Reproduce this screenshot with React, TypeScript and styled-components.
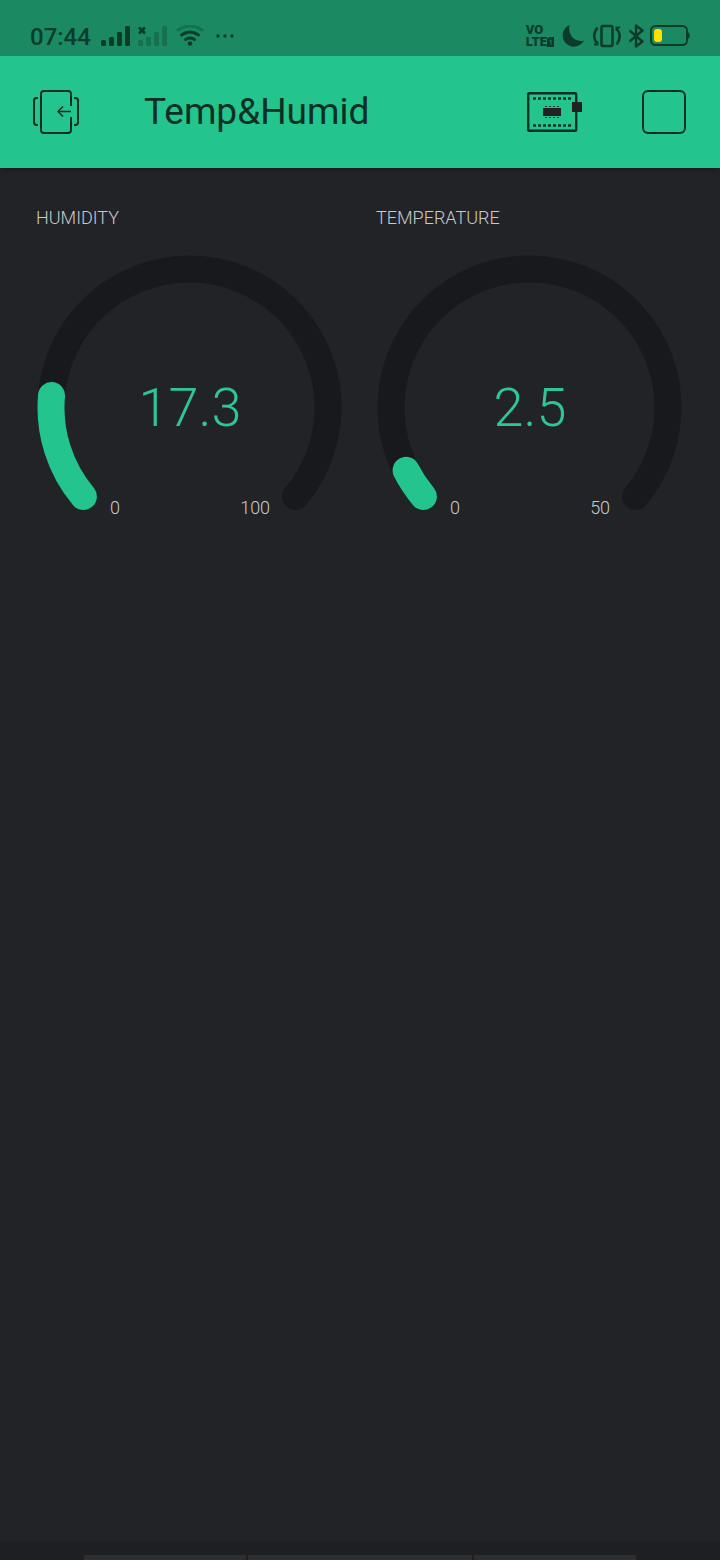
import React from "react";
import styled, { createGlobalStyle } from "styled-components";

const green = "#24c48e";
const ink = "#0b3b2a";
const headerInk = "#0c2f23";

const GlobalStyle = createGlobalStyle`
  * { box-sizing: border-box; }
  body {
    margin: 0;
    background: #222327;
    font-family: Roboto, "Liberation Sans", sans-serif;
  }
`;

const Screen = styled.div`
  min-height: 100vh;
  display: flex;
  flex-direction: column;
  background: #222327;
`;

const StatusBar = styled.div`
  height: 56px;
  padding: 16px 30px 0;
  display: flex;
  justify-content: space-between;
  align-items: center;
  background: #1b8a63;
  color: ${ink};
`;

const StatusGroup = styled.div<{ $gap: number }>`
  display: flex;
  align-items: center;
  gap: ${(p) => p.$gap}px;
`;

const Clock = styled.time`
  margin-right: 2px;
  padding-top: 2px;
  font-size: 24px;
  line-height: 28px;
  font-weight: 500;
`;

const Volte = styled.span`
  display: flex;
  flex-direction: column;
  font-size: 13px;
  line-height: 12px;
  font-weight: 900;
`;

const VolteRow = styled.span`
  display: flex;
  align-items: center;
`;

const AppBar = styled.header`
  height: 112px;
  padding: 0 33px 0 32px;
  display: flex;
  align-items: center;
  background: ${green};
  box-shadow: 0 4px 4px -2px #1a1b1e;
`;

const Title = styled.h1`
  flex: 1;
  margin: 0 0 0 64px;
  font-size: 37px;
  line-height: 48px;
  font-weight: 400;
  color: ${headerInk};
`;

const IconButton = styled.button<{ $after?: number }>`
  display: flex;
  padding: 0;
  border: 0;
  margin-right: ${(p) => p.$after ?? 0}px;
  background: none;
  cursor: pointer;
`;

const Board = styled.main`
  flex: 1;
  display: grid;
  grid-template-columns: 1fr 1fr;
  align-content: start;
  padding: 36px 20px;
`;

const Widget = styled.section`
  padding: 0 16px;
`;

const WidgetLabel = styled.h2`
  margin: 0 0 22px;
  font-size: 18px;
  line-height: 28px;
  font-weight: 300;
  color: #c9cacd;
`;

const Dial = styled.div`
  display: grid;
  & > * { grid-area: 1 / 1; }
`;

const DialArc = styled.svg`
  display: block;
  width: 100%;
`;

const Reading = styled.output`
  place-self: center;
  padding-top: 44px;
  font-size: 54px;
  line-height: 64px;
  font-weight: 300;
  color: #2fc596;
`;

const Limits = styled.div`
  align-self: end;
  display: flex;
  justify-content: space-between;
  padding: 0 24%;
  font-size: 18px;
  line-height: 20px;
  font-weight: 300;
  color: #c9cacd;
`;

const Dock = styled.div`
  height: 19px;
  padding: 14px 84px 0;
  display: grid;
  grid-template-columns: 162fr 224fr 162fr;
  gap: 2px;
  background: #1e1f22;
`;

const DockSlot = styled.div`
  background: #2f2d2e;
`;

const CENTER_X = 153.5;
const CENTER_Y = 153.5;
const RADIUS = 138.5;
const START = 220;
const SWEEP = 260;

function point(angle: number) {
  const rad = (angle * Math.PI) / 180;
  return `${CENTER_X + RADIUS * Math.cos(rad)} ${CENTER_Y - RADIUS * Math.sin(rad)}`;
}

function arc(fraction: number) {
  const span = SWEEP * fraction;
  return `M${point(START)} A${RADIUS} ${RADIUS} 0 ${span > 180 ? 1 : 0} 1 ${point(START - span)}`;
}

function Gauge({ label, value, max }: { label: string; value: number; max: number }) {
  return (
    <Widget aria-label={label}>
      <WidgetLabel>{label}</WidgetLabel>
      <Dial>
        <DialArc viewBox="0 0 308 264" fill="none" strokeWidth="27" strokeLinecap="round" aria-hidden="true">
          <path d={arc(1)} stroke="#18191c" />
          <path d={arc(value / max)} stroke={green} />
        </DialArc>
        <Reading>{value}</Reading>
        <Limits>
          <span>0</span>
          <span>{max}</span>
        </Limits>
      </Dial>
    </Widget>
  );
}

const SignalBars = () => (
  <>
    <rect x="0" y="14" width="5" height="6" rx="1.5" />
    <rect x="8" y="11" width="5" height="9" rx="1.5" />
    <rect x="16" y="6" width="5" height="14" rx="1.5" />
    <rect x="24" y="0" width="5" height="20" rx="1.5" />
  </>
);

const Signal = () => (
  <svg width="29" height="20" viewBox="0 0 29 20" fill={ink} aria-hidden="true">
    <SignalBars />
  </svg>
);

const NoSignal = () => (
  <svg width="30" height="20" viewBox="0 0 30 20" fill="#15714f" aria-hidden="true">
    <SignalBars />
    <path d="M1 1.500l6 6M7 1.500l-6 6" stroke={ink} strokeWidth="2.600" />
  </svg>
);

const Wifi = () => (
  <svg width="28" height="22" viewBox="0 0 28 22" fill="none" strokeWidth="3" strokeLinecap="round" aria-hidden="true">
    <path d="M2 5Q14-3 26 5" stroke="#15714f" />
    <path d="M5.500 10Q14 4 22.500 10M9.500 14.500Q14 11.500 18.500 14.500" stroke={ink} />
    <circle cx="14" cy="18.500" r="2.200" fill={ink} />
  </svg>
);

const More = () => (
  <svg width="24" height="6" viewBox="0 0 24 6" fill={ink} aria-hidden="true">
    <circle cx="6" cy="3" r="1.700" />
    <circle cx="13" cy="3" r="1.700" />
    <circle cx="20" cy="3" r="1.700" />
  </svg>
);

const SimSlot = () => (
  <svg width="7" height="10" viewBox="0 0 7 10" aria-hidden="true">
    <path d="M2 0h5v10H0V2z" fill={ink} />
    <path d="M2.500 3.500h1.500v4" stroke="#1b8a63" fill="none" />
  </svg>
);

const Moon = () => (
  <svg width="26" height="24" viewBox="0 0 26 24" fill={ink} aria-hidden="true">
    <path d="M9.500 1A11.300 11.300 0 1 0 24 16.500Q18 18.500 13 14Q8 8.500 9.500 1z" />
  </svg>
);

const Vibrate = () => (
  <svg width="30" height="24" viewBox="0 0 30 24" fill="none" stroke={ink} strokeWidth="2.500" aria-hidden="true">
    <rect x="9.500" y="2" width="11" height="20" rx="1.500" />
    <path d="M5.500 3.500Q-1 12 5 19.500M24.500 4.500Q31 12 24.500 20.500" />
    <path d="M2 20.500h3.500v-3M28 3.500h-3.500v3" strokeWidth="2" />
  </svg>
);

const Bluetooth = () => (
  <svg width="16" height="24" viewBox="0 0 16 24" fill="none" stroke={ink} strokeWidth="2.400" strokeLinejoin="round" aria-hidden="true">
    <path d="M1.500 6.500l13 11-6.500 5V1.500l6.500 5-13 11" />
  </svg>
);

const Battery = () => (
  <svg width="40" height="22" viewBox="0 0 40 22" aria-hidden="true">
    <rect x="1" y="1" width="36" height="19" rx="4.500" fill="none" stroke={ink} strokeWidth="2" />
    <path d="M38 7q4 3.500 0 7z" fill={ink} />
    <rect x="4" y="4" width="8" height="13" rx="3" fill="#ffe100" />
  </svg>
);

const ExitIcon = () => (
  <svg width="48" height="44" viewBox="0 0 48 44" fill="none" stroke={headerInk} strokeWidth="2" strokeLinejoin="round" aria-hidden="true">
    <path d="M39 16V4Q39 1 36 1H12Q9 1 9 4V40Q9 43 12 43H36Q39 43 39 40V27" />
    <path d="M6 8H4.500Q2 8 2 10.500V32Q2 35 4.500 35H6M42 8H43.500Q46 8 46 10.500V32Q46 35 43.500 35H42" />
    <path d="M39 21.500H26M31 16.500l-5 5 5 5" strokeWidth="1.600" />
  </svg>
);

const DeviceIcon = () => (
  <svg width="56" height="40" viewBox="0 0 56 40" fill="none" stroke={headerInk} aria-hidden="true">
    <rect x="1.200" y="1.200" width="48" height="37.600" rx="1" strokeWidth="2.400" />
    <path d="M6 6.500H45M6 33.500H45" strokeWidth="2.400" strokeDasharray="3 2" />
    <path d="M18 14.500H34M18 25.500H34" strokeWidth="1.200" strokeDasharray="2 2" />
    <rect x="16" y="16" width="18" height="8" fill="#212226" stroke="none" />
    <rect x="45" y="10" width="10" height="10" fill="#212226" stroke="none" />
  </svg>
);

const StopIcon = () => (
  <svg width="46" height="46" viewBox="0 0 46 46" fill="none" stroke={headerInk} strokeWidth="2" aria-hidden="true">
    <rect x="2" y="2" width="42" height="42" rx="5" />
  </svg>
);

export default function App() {
  return (
    <Screen>
      <GlobalStyle />
      <StatusBar>
        <StatusGroup $gap={8}>
          <Clock>07:44</Clock>
          <Signal />
          <NoSignal />
          <Wifi />
          <More />
        </StatusGroup>
        <StatusGroup $gap={6}>
          <Volte>
            <span>VO</span>
            <VolteRow>LTE<SimSlot /></VolteRow>
          </Volte>
          <Moon />
          <Vibrate />
          <Bluetooth />
          <Battery />
        </StatusGroup>
      </StatusBar>
      <AppBar>
        <IconButton aria-label="Exit"><ExitIcon /></IconButton>
        <Title>Temp&amp;Humid</Title>
        <IconButton aria-label="Devices" $after={58}><DeviceIcon /></IconButton>
        <IconButton aria-label="Stop"><StopIcon /></IconButton>
      </AppBar>
      <Board>
        <Gauge label="HUMIDITY" value={17.3} max={100} />
        <Gauge label="TEMPERATURE" value={2.5} max={50} />
      </Board>
      <Dock>
        <DockSlot />
        <DockSlot />
        <DockSlot />
      </Dock>
    </Screen>
  );
}
